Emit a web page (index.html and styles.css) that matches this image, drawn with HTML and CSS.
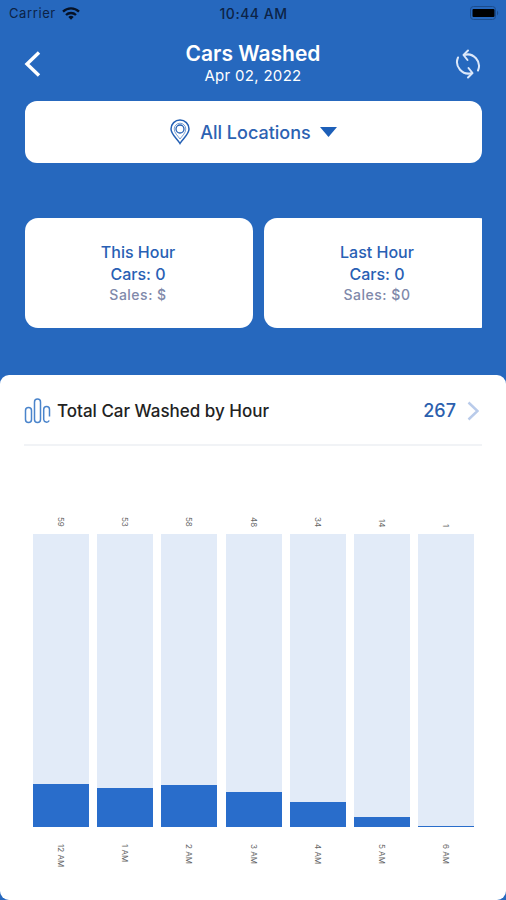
FILE: index.html
```html
<!DOCTYPE html>
<html lang="en">
<head>
    <meta charset="UTF-8">
    <meta name="viewport" content="width=device-width, initial-scale=1.0">
    <title>Cars Washed</title>
    <link rel="stylesheet" href="styles.css">
</head>
<body>
    <div class="status-bar">
        <div class="carrier">
            <span>Carrier</span>
            <svg width="18" height="13" viewBox="0 0 18 13" fill="none" stroke="#061226" stroke-width="2.3">
                <path d="M1 4.6a11.5 11.5 0 0 1 16 0"/>
                <path d="M4 8a7.2 7.2 0 0 1 10 0"/>
                <path d="M9 12.8 6.3 10a4 4 0 0 1 5.4 0z" fill="#061226" stroke="none"/>
            </svg>
        </div>
        <span class="time">10:44 AM</span>
        <svg class="battery" width="30" height="14" viewBox="0 0 30 14">
            <rect x=".5" y=".5" width="25" height="13" rx="3" fill="none" stroke="#1c4c8c"/>
            <rect x="2.5" y="3" width="22" height="8" rx="1" fill="#000"/>
            <path d="M27 4.5q2.5 2.5 0 5z" fill="#1c4c8c"/>
        </svg>
    </div>

    <header>
        <svg width="18" height="28" viewBox="0 0 18 28" fill="none" stroke="#fff" stroke-width="3.4">
            <path d="M15 2.5 3 14l12 11.5"/>
        </svg>
        <div class="title">
            <h1>Cars Washed</h1>
            <p>Apr 02, 2022</p>
        </div>
        <svg class="refresh" width="28" height="30" viewBox="0 0 28 30" fill="none" stroke="#dce8fa" stroke-width="2" stroke-linecap="round" stroke-linejoin="round">
            <path d="M4 8.500A11.500 11.500 0 0 0 18 24"/>
            <path d="M14.500 19 18.500 24 14 28.500"/>
            <path d="M24 21.500A11.500 11.500 0 0 0 10 6"/>
            <path d="M14 1.500 9.500 6 13.500 11"/>
        </svg>
    </header>

    <div class="location">
        <svg width="20" height="26" viewBox="0 0 20 26" fill="none" stroke="#2460b4" stroke-width="1.5">
            <path d="M10 24.500C7.500 20 1 15.500 1 10a9 9 0 0 1 18 0c0 5.500-6.500 10-9 14.500z"/>
            <path d="M10 20C8 17 4.200 14 4.200 10a5.800 5.800 0 0 1 11.600 0c0 4-3.800 7-5.800 10z" stroke-width=".6"/>
            <circle cx="10" cy="10" r="4" stroke-width="1.300"/>
        </svg>
        <span>All Locations</span>
        <svg class="caret" width="17" height="10" viewBox="0 0 17 10"><path d="M0 0h17L8.500 10z" fill="#1d5fb8"/></svg>
    </div>

    <div class="cards">
        <div class="card">
            <p>This Hour</p>
            <p>Cars: 0</p>
            <p class="sales">Sales: $</p>
        </div>
        <div class="card">
            <p>Last Hour</p>
            <p>Cars: 0</p>
            <p class="sales">Sales: $0</p>
        </div>
    </div>

    <main>
        <div class="panel-title">
            <svg width="27" height="26" viewBox="0 0 27 26" fill="none" stroke="#4a84cb" stroke-width="1.500">
                <rect x="1.500" y="9.500" width="6" height="15" rx="3"/>
                <rect x="10.500" y="1" width="6" height="23.500" rx="3"/>
                <path d="M25.500 18.500V11.500a2.900 2.900 0 0 0-5.800 0v10a2.900 2.900 0 0 0 5.500 1"/>
            </svg>
            <h2>Total Car Washed by Hour</h2>
            <span class="total">267</span>
            <svg width="12" height="20" viewBox="0 0 12 20" fill="none" stroke="#b9cbea" stroke-width="2.500">
                <path d="M1.500 1.500 10.500 10l-9 8.500"/>
            </svg>
        </div>

        <div class="chart">
            <div class="column">
                <span class="value">59</span>
                <div class="bar"><div class="fill" style="height: 43px"></div></div>
                <span class="hour">12 AM</span>
            </div>
            <div class="column">
                <span class="value">53</span>
                <div class="bar"><div class="fill" style="height: 39px"></div></div>
                <span class="hour">1 AM</span>
            </div>
            <div class="column">
                <span class="value">58</span>
                <div class="bar"><div class="fill" style="height: 42px"></div></div>
                <span class="hour">2 AM</span>
            </div>
            <div class="column">
                <span class="value">48</span>
                <div class="bar"><div class="fill" style="height: 35px"></div></div>
                <span class="hour">3 AM</span>
            </div>
            <div class="column">
                <span class="value">34</span>
                <div class="bar"><div class="fill" style="height: 25px"></div></div>
                <span class="hour">4 AM</span>
            </div>
            <div class="column">
                <span class="value">14</span>
                <div class="bar"><div class="fill" style="height: 10px"></div></div>
                <span class="hour">5 AM</span>
            </div>
            <div class="column">
                <span class="value">1</span>
                <div class="bar"><div class="fill" style="height: 1px"></div></div>
                <span class="hour">6 AM</span>
            </div>
        </div>
    </main>
</body>
</html>
```
FILE: styles.css
```css
* {
    box-sizing: border-box;
}
body {
    margin: 0;
    height: 900px;
    display: flex;
    flex-direction: column;
    overflow: hidden;
    font-family: Inter, sans-serif;
    background-color: #2668be;
    color: #fff;
}
h1, h2, p {
    margin: 0;
}
svg {
    display: block;
    flex: none;
}
.status-bar {
    display: grid;
    grid-template-columns: 1fr auto 1fr;
    align-items: center;
    height: 26px;
    padding: 0 6px 0 9px;
    font-size: 13px;
    color: #0c2346;
}
.carrier {
    display: flex;
    align-items: center;
    gap: 6px;
    letter-spacing: 0.6px;
}
.time {
    font-size: 14px;
    font-weight: 500;
    letter-spacing: 0.5px;
    margin-right: 2px;
}
.battery {
    justify-self: end;
}
header {
    display: grid;
    grid-template-columns: 1fr auto 1fr;
    align-items: center;
    height: 75px;
    padding: 0 24px;
}
.title {
    text-align: center;
}
.refresh {
    justify-self: end;
}
h1 {
    font-size: 21px;
    line-height: 25px;
    font-weight: 600;
}
.title p {
    font-size: 15px;
    line-height: 20px;
    letter-spacing: 0.3px;
}
.location {
    display: flex;
    justify-content: center;
    align-items: center;
    height: 62px;
    margin: 0 24px 0 25px;
    border-radius: 12px;
    background-color: #fff;
    color: #2c62b2;
    font-size: 18px;
    font-weight: 500;
}
.location span {
    margin: 0 9px 0 10px;
}
.cards {
    display: flex;
    gap: 11px;
    margin: 55px 24px 0 25px;
    overflow: hidden;
}
.card {
    flex: none;
    width: 228px;
    height: 110px;
    padding-top: 23px;
    padding-right: 2px;
    border-radius: 13px;
    background-color: #fff;
    color: #2860b4;
    text-align: center;
    font-size: 16px;
    line-height: 22px;
    font-weight: 500;
}
.card .sales {
    color: #8089aa;
    font-size: 14px;
    line-height: 20px;
    letter-spacing: 0.5px;
}
main {
    height: 525px;
    margin-top: 47px;
    padding: 0 24px;
    border-radius: 9px;
    background-color: #fff;
    color: #222;
}
.panel-title {
    display: flex;
    align-items: center;
    height: 71px;
    padding: 2px 3px 0 0;
    border-bottom: 2px solid #f1f3f6;
}
h2 {
    flex: 1;
    margin-left: 6px;
    font-size: 17px;
    font-weight: 500;
}
.total {
    margin-right: 11px;
    color: #2c5fae;
    font-size: 18px;
    font-weight: 500;
}
.chart {
    display: flex;
    gap: 8.2px;
    padding: 65px 8px 0 9px;
}
.column {
    flex: 1;
    display: flex;
    flex-direction: column;
    align-items: center;
}
.value, .hour {
    writing-mode: vertical-rl;
    font-size: 8px;
    line-height: 10px;
    color: #666;
}
.value {
    height: 16px;
    margin-bottom: 7px;
    text-align: right;
}
.bar {
    display: flex;
    align-items: flex-end;
    width: 100%;
    height: 293px;
    background-color: #e2ebf8;
}
.fill {
    width: 100%;
    background-color: #296dcb;
}
.hour {
    margin-top: 17px;
}
```
